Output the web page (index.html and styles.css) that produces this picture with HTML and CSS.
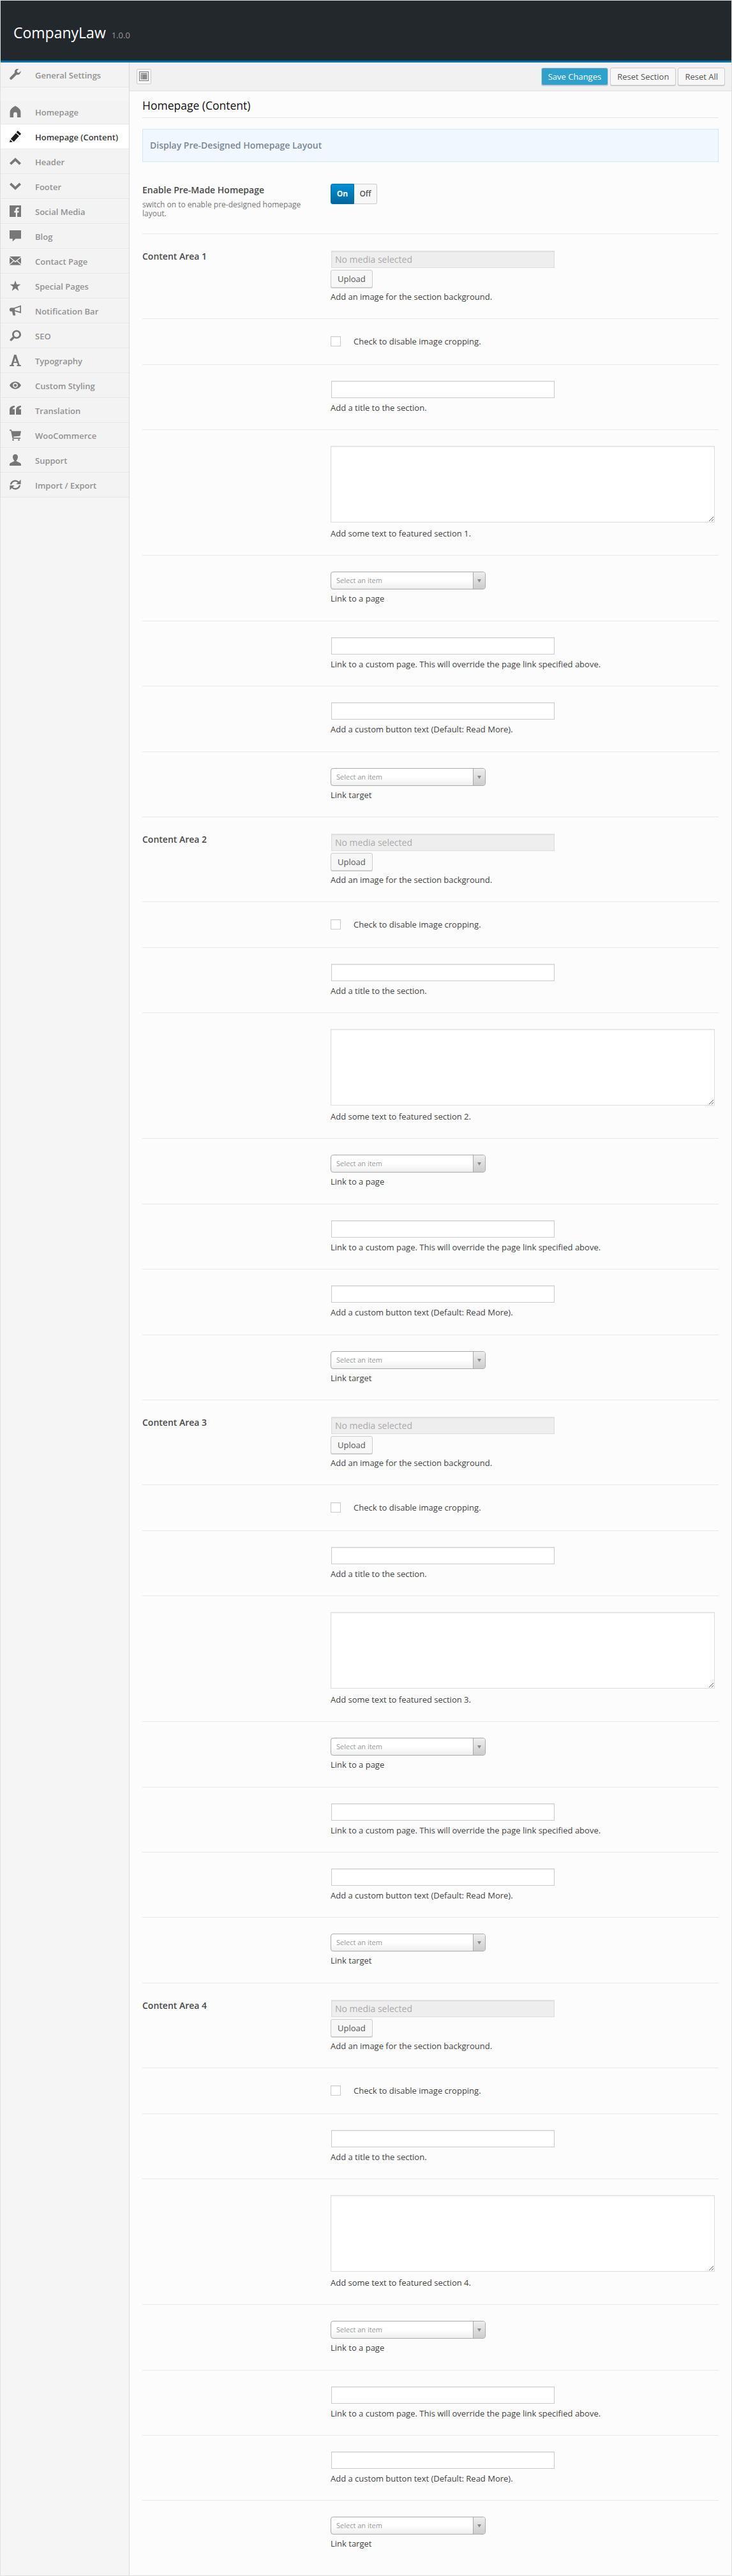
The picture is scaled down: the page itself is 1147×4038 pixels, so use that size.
FILE: index.html
```html
<!DOCTYPE html>
<html lang="en">
<head>
    <meta charset="UTF-8">
    <title>CompanyLaw Options</title>
    <link rel="stylesheet" href="styles.css">
</head>
<body>
<div class="wrap">
    <header class="top">
        <h2 class="logo">CompanyLaw</h2>
        <span class="version">1.0.0</span>
    </header>
    <div class="panel">
        <nav class="side">
            <a class="side-item side-first" href="#"><svg class="ico" viewBox="0 0 18 18"><path d="M17.6 3.2l-3 3-2.5-.7-.7-2.500 3-3c-1.800-.5-3.800-.1-5.100 1.300-1.300 1.300-1.700 3.100-1.200 4.800L.9 13.300c-.9.9-.9 2.200-.1 3 .8.8 2.200.8 3-.1l7.200-7.100c1.700.5 3.500.1 4.800-1.200 1.400-1.300 1.900-3.100 1.800-4.700z"/></svg>General Settings</a>
            <a class="side-item side-gap" href="#"><svg class="ico" viewBox="0 0 18 18"><path d="M9 0c3 1.300 6.200 3.600 7.700 6.500.6 1.100.7 2.300.7 3.500v8h-5.500v-5.500c0-1.700-1.200-2.700-2.900-2.700s-2.900 1-2.900 2.700V18H.6v-8c0-1.200.1-2.400.7-3.500C2.800 3.600 6 1.300 9 0z"/></svg>Homepage</a>
            <a class="side-item active" href="#"><svg class="ico" viewBox="0 0 18 18"><path d="M13.300.3l4.300 3.900c.4.400.4.800 0 1.200l-1.700 1.900L10.800 2.700 12.200.4c.3-.4.700-.4 1.100-.1zM9.900 3.800l5 4.500-8.200 9-5-4.500zM1 14l3.900 3.500-4.900.5z"/></svg>Homepage (Content)</a>
            <a class="side-item" href="#"><svg class="ico" viewBox="0 0 18 18"><path d="M9 3.200l9 8.600-2.700 2.700L9 8.500l-6.300 6L0 11.800z"/></svg>Header</a>
            <a class="side-item" href="#"><svg class="ico" viewBox="0 0 18 18"><path d="M9 14.800L0 6.200l2.700-2.700L9 9.500l6.300-6L18 6.200z"/></svg>Footer</a>
            <a class="side-item" href="#"><svg class="ico" viewBox="0 0 18 18"><path fill-rule="evenodd" d="M0 0h18v18H0zM12 18v-6.800h2.300l.4-2.700H12V6.900c0-.8.2-1.300 1.300-1.300h1.400V3.200c-.3 0-1.100-.1-2-.1-2.100 0-3.500 1.300-3.500 3.500v1.900H7.300v2.700h2.400V18z"/></svg>Social Media</a>
            <a class="side-item" href="#"><svg class="ico" viewBox="0 0 18 18"><path d="M0 0h18v13.200H9.500L4.600 17.500l.2-4.300H0z"/></svg>Blog</a>
            <a class="side-item" href="#"><svg class="ico" viewBox="0 0 18 18"><path d="M0 2h18L9 9.500zM0 3.800v10l5.800-5.200zM18 3.800v10l-5.800-5.200zM6.800 9.500L9 11.400l2.200-1.900 6.800 6.100H0z"/></svg>Contact Page</a>
            <a class="side-item" href="#"><svg class="ico" viewBox="0 0 18 18"><path d="M9 .8l2.100 6h6.400l-5.100 3.800 1.900 6.300L9 13.100l-5.300 3.800 1.900-6.300L.5 6.800h6.400z"/></svg>Special Pages</a>
            <a class="side-item" href="#"><svg class="ico" viewBox="0 0 18 18"><path fill-rule="evenodd" d="M18 .5v12.500L8 9.900v.3l1.200 5.300c.1.600-.2 1-.8 1H6.200c-.5 0-.9-.3-1-.8L4 10.300H2.200C1 10.300 0 9.300 0 8V6.600c0-1.200 1-2.200 2.200-2.200H7zM16.300 3L8.200 5.800v2.400l8.100 2.400z"/></svg>Notification Bar</a>
            <a class="side-item" href="#"><svg class="ico" viewBox="0 0 18 18"><path fill-rule="evenodd" d="M11 .5c3.800 0 7 3 7 6.800S14.800 14 11 14c-1.300 0-2.500-.4-3.500-1L3.600 17c-.7.700-1.800.7-2.500.1-.7-.7-.7-1.800 0-2.500l3.900-3.900c-.6-1-1-2.200-1-3.400C4 3.500 7.200.5 11 .5zm0 2.600c-2.300 0-4.200 1.900-4.200 4.200s1.900 4.100 4.200 4.100 4.200-1.800 4.200-4.100S13.300 3.100 11 3.100z"/></svg>SEO</a>
            <a class="side-item" href="#"><svg class="ico" viewBox="0 0 18 18"><path fill-rule="evenodd" d="M7.200 0h3.200l5.200 15.700 2.400.8V18h-6.600v-1.500l1.500-.7-1-3.100H6.400l-.9 3.100 1.500.7V18H0v-1.500l2.500-.8zM8.900 5.100l-2 6h3.900z"/></svg>Typography</a>
            <a class="side-item" href="#"><svg class="ico" viewBox="0 0 18 18"><path fill-rule="evenodd" d="M9 3.200c3.900 0 7.200 2.400 9 5.800-1.800 3.400-5.100 5.800-9 5.800S1.800 12.400 0 9c1.800-3.400 5.100-5.800 9-5.800zm0 1.900c-2.200 0-3.900 1.700-3.900 3.900s1.700 3.900 3.900 3.900 3.900-1.700 3.900-3.900S11.200 5.100 9 5.100zM9 6.700c1.300 0 2.300 1 2.300 2.300s-1 2.300-2.300 2.300-2.300-1-2.300-2.300 1-2.300 2.300-2.300z"/></svg>Custom Styling</a>
            <a class="side-item" href="#"><svg class="ico" viewBox="0 0 18 18"><path d="M8 2v2.200c-2 .4-3.100 1.600-3.300 3.400H8V16H0V8.500C0 4.500 3.200 2 8 2zM18 2v2.200c-2 .4-3.100 1.600-3.300 3.400H18V16h-8V8.500C10 4.500 13.200 2 18 2z"/></svg>Translation</a>
            <a class="side-item" href="#"><svg class="ico" viewBox="0 0 18 18"><path d="M0 .5h3l.6 2.200H18l-1.500 7.800-10.300 1 .3 1.500h10.600v1.700H4.700L2 2.200H0zM5.500 15.200a1.400 1.400 0 1 1 0 2.800 1.400 1.400 0 0 1 0-2.800zM14.500 15.200a1.400 1.400 0 1 1 0 2.800 1.400 1.400 0 0 1 0-2.800z"/></svg>WooCommerce</a>
            <a class="side-item" href="#"><svg class="ico" viewBox="0 0 18 18"><path d="M9 0c2.400 0 4 1.800 4 4.200 0 2.100-.9 4.100-2 5.200-.5.600-.3 1.500.4 1.900l4.700 2.300c1.200.6 1.900 1.400 1.900 2.700V18H0v-1.700c0-1.300.7-2.100 1.900-2.700l4.700-2.300c.7-.4.900-1.300.4-1.900-1.100-1.100-2-3.100-2-5.200C5 1.800 6.600 0 9 0z"/></svg>Support</a>
            <a class="side-item" href="#"><svg class="ico" viewBox="0 0 18 18"><path d="M9 1.500c2.200 0 4.200.9 5.500 2.400L17.600.8V8h-7.200l2.500-2.500C11.900 4.500 10.500 3.900 9 3.900c-2.800 0-5.200 2-5.800 4.600H.8C1.400 4.500 4.800 1.500 9 1.500zM.4 10h7.200l-2.500 2.500c1 1 2.400 1.600 3.900 1.600 2.800 0 5.200-2 5.800-4.600h2.400c-.6 4-4 7-8.200 7-2.200 0-4.200-.9-5.500-2.400L.4 17.200z"/></svg>Import / Export</a>
        </nav>
        <main class="main">
            <div class="toolbar">
                <a class="expand" href="#"><svg viewBox="0 0 15 15" width="15" height="15"><path fill="#777" fill-rule="evenodd" d="M0 0h15v15H0zM1 1v13h13V1z"/><path fill="#777" d="M2.500 2.500h10v2h-10zM4.500 5h8v7.500h-8zM2.500 5H4v7.500H2.500z" opacity=".85"/></svg></a>
                <div class="actions">
                    <button class="btn btn-save">Save Changes</button>
                    <button class="btn">Reset Section</button>
                    <button class="btn">Reset All</button>
                </div>
            </div>
            <div class="content">
                <h2 class="page-title">Homepage (Content)</h2>
                <div class="info">Display Pre-Designed Homepage Layout</div>

                <div class="row row-enable">
                    <div class="row-label">
                        <div class="label-title">Enable Pre-Made Homepage</div>
                        <div class="label-sub">switch on to enable pre-designed homepage layout.</div>
                    </div>
                    <div class="toggle"><span class="toggle-on">On</span><span class="toggle-off">Off</span></div>
                </div>

                <!-- area 1 -->
                <div class="row row-image">
                    <div class="row-label"><div class="label-title">Content Area 1</div></div>
                    <div>
                        <input class="text media-text" type="text" placeholder="No media selected" readonly>
                        <button class="btn btn-upload">Upload</button>
                        <div class="desc">Add an image for the section background.</div>
                    </div>
                </div>
                <div class="row row-check">
                    <div></div>
                    <label class="check"><input type="checkbox">Check to disable image cropping.</label>
                </div>
                <div class="row">
                    <div></div>
                    <div><input class="text" type="text"><div class="desc">Add a title to the section.</div></div>
                </div>
                <div class="row row-area">
                    <div></div>
                    <div><textarea class="area"></textarea><div class="desc">Add some text to featured section 1.</div></div>
                </div>
                <div class="row">
                    <div></div>
                    <div><div class="select"><span>Select an item</span><i class="select-arrow"></i></div><div class="desc">Link to a page</div></div>
                </div>
                <div class="row">
                    <div></div>
                    <div><input class="text" type="text"><div class="desc">Link to a custom page. This will override the page link specified above.</div></div>
                </div>
                <div class="row">
                    <div></div>
                    <div><input class="text" type="text"><div class="desc">Add a custom button text (Default: Read More).</div></div>
                </div>
                <div class="row">
                    <div></div>
                    <div><div class="select"><span>Select an item</span><i class="select-arrow"></i></div><div class="desc">Link target</div></div>
                </div>

                <!-- area 2 -->
                <div class="row row-image">
                    <div class="row-label"><div class="label-title">Content Area 2</div></div>
                    <div>
                        <input class="text media-text" type="text" placeholder="No media selected" readonly>
                        <button class="btn btn-upload">Upload</button>
                        <div class="desc">Add an image for the section background.</div>
                    </div>
                </div>
                <div class="row row-check">
                    <div></div>
                    <label class="check"><input type="checkbox">Check to disable image cropping.</label>
                </div>
                <div class="row">
                    <div></div>
                    <div><input class="text" type="text"><div class="desc">Add a title to the section.</div></div>
                </div>
                <div class="row row-area">
                    <div></div>
                    <div><textarea class="area"></textarea><div class="desc">Add some text to featured section 2.</div></div>
                </div>
                <div class="row">
                    <div></div>
                    <div><div class="select"><span>Select an item</span><i class="select-arrow"></i></div><div class="desc">Link to a page</div></div>
                </div>
                <div class="row">
                    <div></div>
                    <div><input class="text" type="text"><div class="desc">Link to a custom page. This will override the page link specified above.</div></div>
                </div>
                <div class="row">
                    <div></div>
                    <div><input class="text" type="text"><div class="desc">Add a custom button text (Default: Read More).</div></div>
                </div>
                <div class="row">
                    <div></div>
                    <div><div class="select"><span>Select an item</span><i class="select-arrow"></i></div><div class="desc">Link target</div></div>
                </div>

                <!-- area 3 -->
                <div class="row row-image">
                    <div class="row-label"><div class="label-title">Content Area 3</div></div>
                    <div>
                        <input class="text media-text" type="text" placeholder="No media selected" readonly>
                        <button class="btn btn-upload">Upload</button>
                        <div class="desc">Add an image for the section background.</div>
                    </div>
                </div>
                <div class="row row-check">
                    <div></div>
                    <label class="check"><input type="checkbox">Check to disable image cropping.</label>
                </div>
                <div class="row">
                    <div></div>
                    <div><input class="text" type="text"><div class="desc">Add a title to the section.</div></div>
                </div>
                <div class="row row-area">
                    <div></div>
                    <div><textarea class="area"></textarea><div class="desc">Add some text to featured section 3.</div></div>
                </div>
                <div class="row">
                    <div></div>
                    <div><div class="select"><span>Select an item</span><i class="select-arrow"></i></div><div class="desc">Link to a page</div></div>
                </div>
                <div class="row">
                    <div></div>
                    <div><input class="text" type="text"><div class="desc">Link to a custom page. This will override the page link specified above.</div></div>
                </div>
                <div class="row">
                    <div></div>
                    <div><input class="text" type="text"><div class="desc">Add a custom button text (Default: Read More).</div></div>
                </div>
                <div class="row">
                    <div></div>
                    <div><div class="select"><span>Select an item</span><i class="select-arrow"></i></div><div class="desc">Link target</div></div>
                </div>

                <!-- area 4 -->
                <div class="row row-image">
                    <div class="row-label"><div class="label-title">Content Area 4</div></div>
                    <div>
                        <input class="text media-text" type="text" placeholder="No media selected" readonly>
                        <button class="btn btn-upload">Upload</button>
                        <div class="desc">Add an image for the section background.</div>
                    </div>
                </div>
                <div class="row row-check">
                    <div></div>
                    <label class="check"><input type="checkbox">Check to disable image cropping.</label>
                </div>
                <div class="row">
                    <div></div>
                    <div><input class="text" type="text"><div class="desc">Add a title to the section.</div></div>
                </div>
                <div class="row row-area">
                    <div></div>
                    <div><textarea class="area"></textarea><div class="desc">Add some text to featured section 4.</div></div>
                </div>
                <div class="row">
                    <div></div>
                    <div><div class="select"><span>Select an item</span><i class="select-arrow"></i></div><div class="desc">Link to a page</div></div>
                </div>
                <div class="row">
                    <div></div>
                    <div><input class="text" type="text"><div class="desc">Link to a custom page. This will override the page link specified above.</div></div>
                </div>
                <div class="row">
                    <div></div>
                    <div><input class="text" type="text"><div class="desc">Add a custom button text (Default: Read More).</div></div>
                </div>
                <div class="row row-last">
                    <div></div>
                    <div><div class="select"><span>Select an item</span><i class="select-arrow"></i></div><div class="desc">Link target</div></div>
                </div>
            </div>
        </main>
    </div>
</div>
</body>
</html>
```

FILE: styles.css
```css
* {
    box-sizing: border-box;
}
body {
    margin: 0;
    background: #f1f1f1;
    font-family: "Open Sans", "Liberation Sans", sans-serif;
    font-size: 13px;
    color: #444;
}
.wrap {
    border: 1px solid #dedede;
    min-height: 4038px;
    display: flex;
    flex-direction: column;
}

/* header */
.top {
    height: 97px;
    background: #23282d;
    border-bottom: 3px solid #0073aa;
    padding: 34px 0 0 20px;
    display: flex;
    align-items: baseline;
    gap: 9px;
}
.logo {
    margin: 0;
    font-size: 23px;
    font-weight: 400;
    line-height: 32px;
    color: #fff;
}
.version {
    font-size: 13px;
    color: #999;
}

/* sidebar */
.panel {
    flex: 1;
    display: flex;
}
.side {
    width: 202px;
    flex-shrink: 0;
    background: #f5f5f5;
    border-right: 1px solid #d8d8d8;
}
.side-item {
    height: 39px;
    display: flex;
    align-items: center;
    padding-left: 14px;
    background: #f3f3f3;
    border-top: 1px solid #f7f7f7;
    border-bottom: 1px solid #e6e6e6;
    color: #929292;
    font-weight: 600;
    text-decoration: none;
    white-space: nowrap;
}
.side-first {
    height: 39px;
}
.side-gap {
    margin-top: 19px;
}
.side-item.active {
    background: #fff;
    border-top-color: #fff;
    color: #3a3a3a;
}
.ico {
    width: 18px;
    height: 18px;
    margin-right: 22px;
    fill: #777;
    flex-shrink: 0;
    position: relative;
    top: -1px;
}
.active .ico {
    fill: #1e1e1e;
}

/* toolbar */
.main {
    flex: 1;
    min-width: 0;
    background: #fcfcfc;
}
.toolbar {
    height: 45px;
    background: #f1f1f1;
    border-bottom: 1px solid #ddd;
    display: flex;
    align-items: center;
    justify-content: space-between;
    padding: 0 10px 1px 11px;
}
.expand {
    width: 23px;
    height: 24px;
    background: #f7f7f7;
    border: 1px solid #ccc;
    border-radius: 2px;
    display: flex;
    align-items: center;
    justify-content: center;
}
.actions {
    display: flex;
    gap: 3px;
}
.btn {
    height: 28px;
    padding: 0 10px;
    background: #f7f7f7;
    border: 1px solid #ccc;
    border-radius: 3px;
    box-shadow: 0 1px 0 #ccc;
    font-family: inherit;
    font-size: 13px;
    color: #555;
}
.btn-save {
    background: #2ea2cc;
    color: #fff;
}
.btn-upload {
    display: block;
    margin-top: 3px;
}

/* content */
.content {
    padding: 0 20px;
}
.page-title {
    margin: 0;
    height: 42px;
    padding-top: 10px;
    border-bottom: 1px solid #e5e5e5;
    font-size: 17.5px;
    font-weight: 500;
    line-height: 24px;
    color: #111;
}
.info {
    margin-top: 17px;
    height: 52px;
    padding-left: 11px;
    background: #f0f7fe;
    border: 1px solid #d3e9fb;
    font-size: 14px;
    font-weight: 600;
    line-height: 49px;
    color: #7a8794;
}
.row {
    display: grid;
    grid-template-columns: 295px 1fr;
    height: 102.4px;
    padding-top: 25px;
    border-bottom: 1px solid #e8e8e8;
}
.row-enable {
    margin-top: 17px;
    height: 96px;
    padding-top: 17px;
}
.row-image {
    height: 133px;
    padding-top: 26px;
}
.row-check {
    height: 72px;
    padding-top: 27px;
}
.row-area {
    height: 197px;
}
.row-last {
    border-bottom: 0;
}
.row-label {
    padding-right: 40px;
}
.label-title {
    font-size: 14px;
    font-weight: 600;
    line-height: 19px;
    color: #4a4a4a;
}
.row-image .label-title {
    margin-top: -1px;
}
.label-sub {
    margin-top: 7px;
    font-size: 12px;
    line-height: 14px;
    color: #777;
}

/* fields */
.text {
    display: block;
    width: 350px;
    height: 27px;
    margin-left: 1px;
    padding: 0 5px;
    background: #fff;
    border: 1px solid #ccc;
    box-shadow: inset 0 1px 2px rgba(0, 0, 0, .07);
    font-family: inherit;
    font-size: 14px;
    outline: 0;
}
.media-text {
    background: #eee;
    border-color: #ddd;
}
.media-text::placeholder {
    color: #aaa;
    opacity: 1;
}
.area {
    display: block;
    width: 602px;
    height: 120px;
    background: #fff;
    border: 1px solid #ddd;
    box-shadow: inset 0 1px 2px rgba(0, 0, 0, .07);
    outline: 0;
}
.desc {
    margin-top: 6px;
    line-height: 19.5px;
    color: #444;
}
.row-image .desc {
    margin-top: 5px;
}
.row-area .desc {
    margin-top: 8px;
}
.select + .desc {
    margin-top: 5px;
}
.check {
    display: flex;
    align-items: center;
    height: 16px;
    color: #444;
}
.check input {
    appearance: none;
    width: 16px;
    height: 16px;
    margin: 0 20px 0 0;
    background: #fff;
    border: 1px solid #ccc;
    box-shadow: inset 0 1px 2px rgba(0, 0, 0, .07);
}
.toggle {
    display: flex;
    width: 73px;
    height: 32px;
    border-radius: 3px;
    font-size: 12px;
    font-weight: 700;
    line-height: 30px;
    text-align: center;
}
.toggle-on {
    width: 37px;
    color: #fff;
    background: linear-gradient(#0091d6, #00679e);
    border: 1px solid #0070a8;
    border-radius: 3px 0 0 3px;
}
.toggle-off {
    width: 36px;
    color: #555;
    font-weight: 600;
    background: #f7f7f7;
    border: 1px solid #ccc;
    border-left: 0;
    border-radius: 0 3px 3px 0;
}
.select {
    display: flex;
    justify-content: space-between;
    width: 243px;
    height: 28px;
    padding-left: 8px;
    background: linear-gradient(#fff 50%, #eee);
    border: 1px solid #aaa;
    border-radius: 4px;
    font-size: 11px;
    line-height: 26px;
    color: #999;
}
.select-arrow {
    width: 19px;
    position: relative;
    border-left: 1px solid #aaa;
    border-radius: 0 3px 3px 0;
    background: linear-gradient(#eee, #ccc);
}
.select-arrow::after {
    content: "";
    position: absolute;
    left: 6px;
    top: 11px;
    border: 3px solid transparent;
    border-top: 5px solid #888;
    border-bottom: 0;
}
```
